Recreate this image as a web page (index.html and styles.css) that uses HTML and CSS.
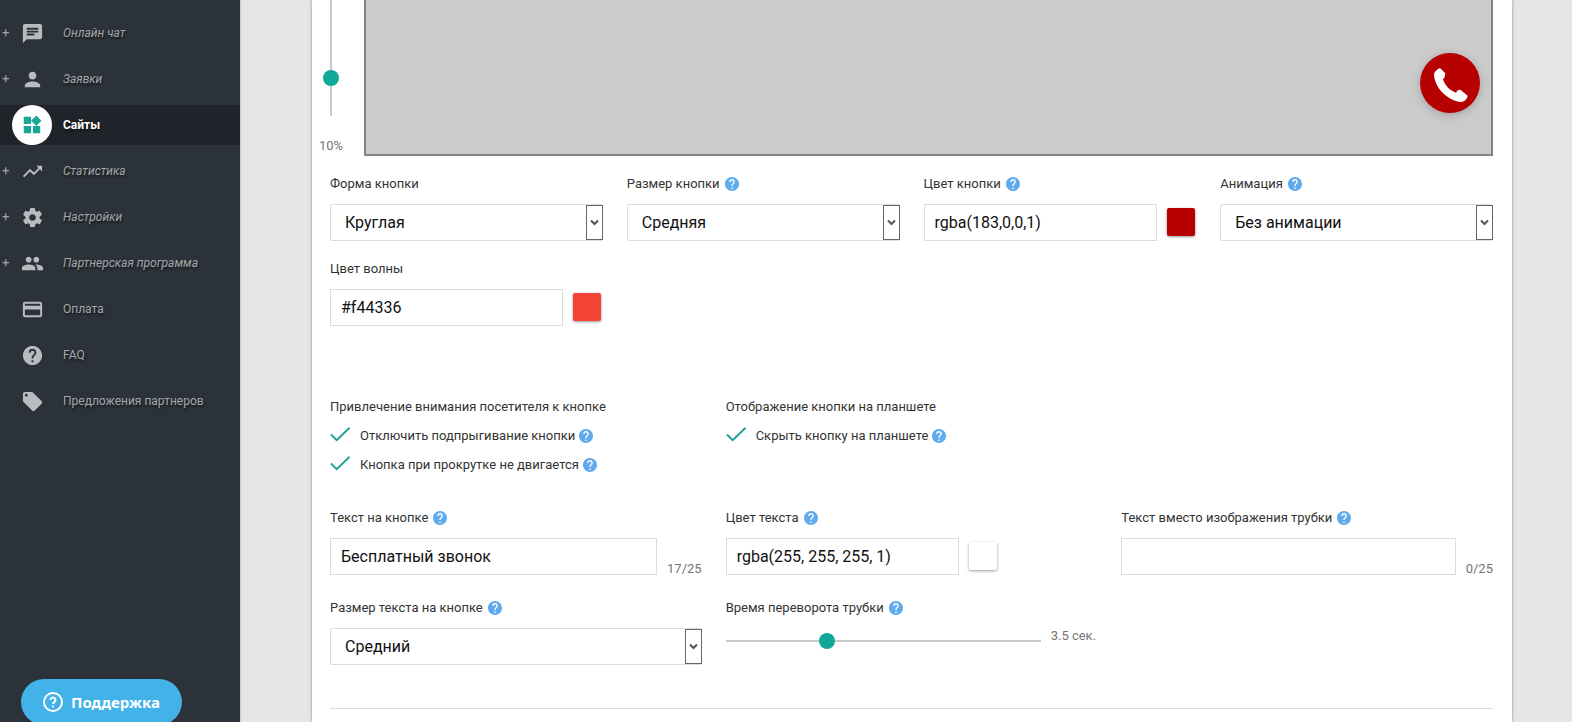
FILE: index.html
```html
<!DOCTYPE html>
<html lang="ru">
<head>
<meta charset="utf-8">
<title>Сайты</title>
<link rel="stylesheet" href="styles.css">
</head>
<body>
<svg class="sprite" aria-hidden="true">
  <symbol id="help" viewBox="2 2 20 20"><path d="M12 2C6.48 2 2 6.48 2 12s4.48 10 10 10 10-4.48 10-10S17.52 2 12 2zm1 17h-2v-2h2v2zm2.07-7.75l-.9.92C13.45 12.9 13 13.5 13 15h-2v-.5c0-1.1.45-2.1 1.17-2.83l1.24-1.26c.37-.36.59-.86.59-1.41 0-1.1-.9-2-2-2s-2 .9-2 2H8c0-2.21 1.79-4 4-4s4 1.79 4 4c0 .88-.36 1.68-.93 2.25z"/></symbol>
  <symbol id="tick" viewBox="0 0 22 16"><path d="M1 8.500 7 14.500 20.500 1.500" fill="none" stroke="currentColor" stroke-width="2"/></symbol>
  <symbol id="arrow" viewBox="0 0 9 7"><path d="M1 1.500 4.500 5 8 1.500" fill="none" stroke="currentColor" stroke-width="2"/></symbol>
</svg>
<div class="page">
  <nav class="sidebar">
    <ul class="menu">
      <li><a class="item sub" href="#"><span class="plus">+</span><span class="icon"><svg viewBox="0 0 24 24"><path d="M20 2H4c-1.100 0-1.990.9-1.990 2L2 22l4-4h14c1.100 0 2-.9 2-2V4c0-1.100-.9-2-2-2zM6 9h12v2H6V9zm8 5H6v-2h8v2zm4-6H6V6h12v2z"/></svg></span>Онлайн чат</a></li>
      <li><a class="item sub" href="#"><span class="plus">+</span><span class="icon"><svg viewBox="0 0 24 24"><path d="M12 12c2.210 0 4-1.790 4-4s-1.790-4-4-4-4 1.790-4 4 1.790 4 4 4zm0 2c-2.670 0-8 1.340-8 4v2h16v-2c0-2.660-5.330-4-8-4z"/></svg></span>Заявки</a></li>
      <li><a class="item active" href="#" aria-current="page"><span class="plus"></span><span class="icon"><svg viewBox="0 0 24 24"><path d="M13 13v8h8v-8h-8zM3 21h8v-8H3v8zM3 3v8h8V3H3zm13.660-1.310L11 7.340 16.660 13l5.660-5.660-5.660-5.650z"/></svg></span>Сайты</a></li>
      <li><a class="item sub" href="#"><span class="plus">+</span><span class="icon"><svg viewBox="0 0 24 24"><path d="M16 6l2.290 2.290-4.880 4.880-4-4L2 16.590 3.410 18l6-6 4 4 6.300-6.290L22 12V6z"/></svg></span>Статистика</a></li>
      <li><a class="item sub" href="#"><span class="plus">+</span><span class="icon"><svg viewBox="0 0 24 24"><path d="M19.430 12.980c.04-.32.07-.64.07-.98s-.03-.66-.07-.98l2.110-1.650c.19-.15.24-.42.12-.64l-2-3.460c-.12-.22-.39-.3-.61-.22l-2.490 1c-.52-.4-1.080-.73-1.690-.98l-.38-2.650C14.460 2.180 14.250 2 14 2h-4c-.25 0-.46.18-.49.42l-.38 2.650c-.61.25-1.170.59-1.690.98l-2.490-1c-.23-.09-.49 0-.61.22l-2 3.460c-.13.22-.07.49.12.64l2.110 1.650c-.04.32-.07.65-.07.98s.03.66.07.98l-2.110 1.650c-.19.15-.24.42-.12.64l2 3.460c.12.22.39.3.61.22l2.490-1c.52.4 1.080.73 1.690.98l.38 2.650c.03.24.24.42.49.42h4c.25 0 .46-.18.49-.42l.38-2.650c.61-.25 1.170-.59 1.690-.98l2.490 1c.23.09.49 0 .61-.22l2-3.460c.12-.22.07-.49-.12-.64l-2.110-1.650zM12 15.500c-1.930 0-3.500-1.570-3.500-3.500s1.570-3.500 3.500-3.500 3.500 1.570 3.500 3.500-1.570 3.500-3.500 3.500z"/></svg></span>Настройки</a></li>
      <li><a class="item sub" href="#"><span class="plus">+</span><span class="icon"><svg viewBox="0 0 24 24"><path d="M16 11c1.660 0 2.990-1.340 2.990-3S17.660 5 16 5c-1.660 0-3 1.340-3 3s1.340 3 3 3zm-8 0c1.660 0 2.990-1.340 2.990-3S9.660 5 8 5C6.340 5 5 6.340 5 8s1.340 3 3 3zm0 2c-2.330 0-7 1.170-7 3.500V19h14v-2.500c0-2.330-4.670-3.500-7-3.500zm8 0c-.29 0-.62.02-.97.05 1.160.84 1.970 1.970 1.970 3.450V19h6v-2.500c0-2.330-4.670-3.500-7-3.500z"/></svg></span>Партнерская программа</a></li>
      <li><a class="item" href="#"><span class="plus"></span><span class="icon"><svg viewBox="0 0 24 24"><path d="M20 4H4c-1.110 0-1.990.89-1.990 2L2 18c0 1.110.89 2 2 2h16c1.110 0 2-.89 2-2V6c0-1.110-.89-2-2-2zm0 14H4v-6h16v6zm0-10H4V6h16v2z"/></svg></span>Оплата</a></li>
      <li><a class="item" href="#"><span class="plus"></span><span class="icon"><svg viewBox="0 0 24 24"><use href="#help" x="2" y="2" width="20" height="20"/></svg></span>FAQ</a></li>
      <li><a class="item" href="#"><span class="plus"></span><span class="icon"><svg viewBox="0 0 24 24"><path d="M21.410 11.580l-9-9C12.050 2.220 11.550 2 11 2H4c-1.100 0-2 .9-2 2v7c0 .55.22 1.050.59 1.420l9 9c.36.36.86.58 1.410.58.55 0 1.050-.22 1.410-.59l7-7c.37-.36.59-.86.59-1.410 0-.55-.23-1.060-.59-1.420zM5.500 7C4.670 7 4 6.330 4 5.500S4.670 4 5.500 4 7 4.670 7 5.500 6.330 7 5.500 7z"/></svg></span>Предложения партнеров</a></li>
    </ul>
  </nav>

  <main class="main">
    <form class="panel">
      <section class="stage">
        <div class="scale">
          <input class="range vertical" id="offset" type="range" min="0" max="100" value="10" aria-label="Отступ">
          <output for="offset">10%</output>
        </div>
        <div class="preview">
          <button class="call" type="button" aria-label="Позвонить"><svg viewBox="0 0 180 180"><path d="M60 45 76 61 74 73 69 79C74 96 90 114 108 119L113 112 121 110 143 128C141 138 133 147 121 147 78 141 43 101 42 64 43 57 49 50 60 45Z"/></svg></button>
        </div>
      </section>

      <section class="grid four">
        <div class="field">
          <div class="caption"><label for="shape">Форма кнопки</label></div>
          <div class="select"><select id="shape"><option>Круглая</option></select><span class="arrow"><svg><use href="#arrow"/></svg></span></div>
        </div>
        <div class="field">
          <div class="caption"><label for="size">Размер кнопки</label><svg class="help"><use href="#help"/></svg></div>
          <div class="select"><select id="size"><option>Средняя</option></select><span class="arrow"><svg><use href="#arrow"/></svg></span></div>
        </div>
        <div class="field">
          <div class="caption"><label for="color">Цвет кнопки</label><svg class="help"><use href="#help"/></svg></div>
          <div class="row"><input class="text color" id="color" type="text" value="rgba(183,0,0,1)"><button class="swatch dark" type="button" aria-label="Выбрать цвет кнопки"></button></div>
        </div>
        <div class="field">
          <div class="caption"><label for="anim">Анимация</label><svg class="help"><use href="#help"/></svg></div>
          <div class="select"><select id="anim"><option>Без анимации</option></select><span class="arrow"><svg><use href="#arrow"/></svg></span></div>
        </div>
        <div class="field">
          <div class="caption"><label for="wave">Цвет волны</label></div>
          <div class="row"><input class="text color" id="wave" type="text" value="#f44336"><button class="swatch red" type="button" aria-label="Выбрать цвет волны"></button></div>
        </div>
      </section>

      <section class="grid three options">
        <fieldset>
          <legend>Привлечение внимания посетителя к кнопке</legend>
          <div class="caption option"><label><input type="checkbox" checked><svg class="tick"><use href="#tick"/></svg>Отключить подпрыгивание кнопки</label><svg class="help"><use href="#help"/></svg></div>
          <div class="caption option"><label><input type="checkbox" checked><svg class="tick"><use href="#tick"/></svg>Кнопка при прокрутке не двигается</label><svg class="help"><use href="#help"/></svg></div>
        </fieldset>
        <fieldset>
          <legend>Отображение кнопки на планшете</legend>
          <div class="caption option"><label><input type="checkbox" checked><svg class="tick"><use href="#tick"/></svg>Скрыть кнопку на планшете</label><svg class="help"><use href="#help"/></svg></div>
        </fieldset>
      </section>

      <section class="grid three texts">
        <div class="field">
          <div class="caption"><label for="label">Текст на кнопке</label><svg class="help"><use href="#help"/></svg></div>
          <div class="row"><input class="text" id="label" type="text" maxlength="25" value="Бесплатный звонок"><span class="count">17/25</span></div>
        </div>
        <div class="field">
          <div class="caption"><label for="tcolor">Цвет текста</label><svg class="help"><use href="#help"/></svg></div>
          <div class="row"><input class="text color" id="tcolor" type="text" value="rgba(255, 255, 255, 1)"><button class="swatch" type="button" aria-label="Выбрать цвет текста"></button></div>
        </div>
        <div class="field">
          <div class="caption"><label for="alt">Текст вместо изображения трубки</label><svg class="help"><use href="#help"/></svg></div>
          <div class="row"><input class="text" id="alt" type="text" maxlength="25"><span class="count">0/25</span></div>
        </div>
        <div class="field">
          <div class="caption"><label for="tsize">Размер текста на кнопке</label><svg class="help"><use href="#help"/></svg></div>
          <div class="select"><select id="tsize"><option>Средний</option></select><span class="arrow"><svg><use href="#arrow"/></svg></span></div>
        </div>
        <div class="field">
          <div class="caption"><label for="flip">Время переворота трубки</label><svg class="help"><use href="#help"/></svg></div>
          <div class="timing"><input class="range" id="flip" type="range" min="1" max="9" step="0.5" value="3.5"><output for="flip">3.5 сек.</output></div>
        </div>
      </section>
      <hr>
    </form>
  </main>
</div>
<button class="support" type="button"><svg viewBox="0 0 20 20"><circle cx="10" cy="10" r="9"/><path d="M7.500 8a2.500 2.500 0 1 1 3.800 2.100c-.8.5-1.300.9-1.300 1.900M10 13.600v1.600"/></svg>Поддержка</button>
</body>
</html>
```
FILE: styles.css
```css
* { box-sizing: border-box; }
body {
  margin: 0;
  background: #e4e6e5;
  color: #333;
  font: 13px/20px Roboto, "Liberation Sans", sans-serif;
}
button, input, select { font: inherit; margin: 0; }
.sprite { position: absolute; width: 0; height: 0; }
.page { display: flex; min-height: 100vh; overflow: hidden; }

.sidebar { flex: none; width: 240px; background: #2c323a; box-shadow: 0 0 2px rgba(0,0,0,.3); }
.menu { list-style: none; margin: 0; padding: 13px 0; display: grid; gap: 6px; }
.item {
  display: flex;
  align-items: center;
  height: 40px;
  color: #a3a6a8;
  font-size: 12px;
  text-decoration: none;
  text-shadow: 1px 2px 2px rgba(0,0,0,.5);
}
.sub { font-style: italic; }
.plus { width: 12px; padding-left: 2px; font-style: normal; font-size: 13px; text-shadow: none; }
.icon {
  display: grid;
  place-items: center;
  width: 40px;
  height: 40px;
  margin-right: 11px;
  border-radius: 50%;
}
.icon svg { width: 23px; height: 23px; fill: #b9bbbf; }
.active { background: #20242a; color: #fff; font-weight: 700; }
.active .icon { background: #fff; }
.active .icon svg { width: 22px; height: 22px; fill: #1aa798; }

.main { display: grid; flex: 1; min-width: 0; padding: 0 60px 0 72px; }
.panel {
  display: flow-root;
  min-width: 0;
  padding: 0 19px 12px 18px;
  background: #fff;
  box-shadow: 0 0 3px rgba(0,0,0,.4);
}

/* The stage starts above the visible area, as in a scrolled form. */
.stage { display: flex; height: 356px; margin: -200px 0 18px -18px; }
.scale { display: flex; flex-direction: column; align-items: center; gap: 20px; width: 38px; margin-right: 14px; color: #757575; }
.preview { position: relative; flex: 1; border: 2px solid #858585; background: #cbcbcb; }
.call {
  position: absolute;
  right: 11px;
  bottom: 41px;
  width: 60px;
  height: 60px;
  padding: 0;
  border: 0;
  border-radius: 50%;
  background: #b70000;
  box-shadow: 0 2px 10px rgba(0,0,0,.2);
}
.call svg { display: block; width: 60px; height: 60px; fill: #fff; }

.grid { display: grid; gap: 18px 24px; }
.four { grid-template-columns: repeat(4, 1fr); }
.three { grid-template-columns: repeat(3, 1fr); }
.options { margin-top: 71px; }
.texts { margin-top: 33px; row-gap: 23px; }
.field { min-width: 0; }
.caption { display: flex; align-items: center; gap: 5px; }
.field .caption { margin-bottom: 10px; }
.help { width: 14px; height: 14px; fill: #5fabee; }

.row { display: flex; align-items: flex-start; gap: 10px; }
.text, .select select {
  width: 100%;
  min-width: 0;
  height: 37px;
  padding: 0 10px;
  border: 1px solid #dcdcdc;
  background: #fff;
  color: #111;
  font-size: 16px;
}
.text { flex: 1; }
.text.color { flex: 0 1 233px; }
.select { position: relative; }
.select select { display: block; padding: 0 30px 0 14px; border-radius: 2px; appearance: none; }
.arrow {
  position: absolute;
  top: 1px;
  right: 0;
  bottom: 1px;
  display: grid;
  place-items: center;
  width: 17px;
  border: 1px solid #666;
  color: #555;
  pointer-events: none;
}
.arrow svg { width: 9px; height: 7px; }
.swatch {
  flex: none;
  width: 28px;
  height: 28px;
  margin-top: 4px;
  padding: 0;
  border: 0;
  border-radius: 2px;
  background: #fff;
  box-shadow: 0 1px 3px rgba(0,0,0,.4);
}
.dark { background: #b70000; }
.red { background: #f44336; }
.count { align-self: flex-end; height: 16px; color: #757575; }

fieldset { min-width: 0; margin: 0; padding: 0; border: 0; }
legend { padding: 0; margin-bottom: 9px; }
.option { gap: 4px; }
.option + .option { margin-top: 9px; }
.option label { display: flex; align-items: flex-start; gap: 9px; }
.option input { position: absolute; opacity: 0; width: 21px; height: 20px; }
.tick { width: 21px; height: 16px; color: #1fa294; }

.timing { display: flex; align-items: flex-start; gap: 10px; line-height: 16px; color: #757575; }
.timing .range { flex: 0 1 315px; min-width: 0; margin-top: 5px; }
.range { height: 16px; appearance: none; background: linear-gradient(#c8c8c8, #c8c8c8) center / 100% 2px no-repeat; }
.range::-webkit-slider-thumb { appearance: none; width: 16px; height: 16px; border-radius: 50%; background: #10a899; }
.range.vertical {
  width: 16px;
  height: 316px;
  writing-mode: vertical-lr;
  direction: rtl;
  background-size: 2px 100%;
}

hr { height: 1px; margin: 43px 0 0; border: 0; background: #dcdcdc; }

.support {
  position: fixed;
  left: 21px;
  bottom: -3px;
  display: flex;
  align-items: center;
  gap: 8px;
  height: 46px;
  padding: 0 22px;
  border: 0;
  border-radius: 23px;
  background: #42b2e8;
  color: #fff;
  font: 700 15px/20px "Noto Sans", "Open Sans", sans-serif;
}
.support svg { width: 20px; height: 20px; fill: none; stroke: #fff; stroke-width: 2; }
```
